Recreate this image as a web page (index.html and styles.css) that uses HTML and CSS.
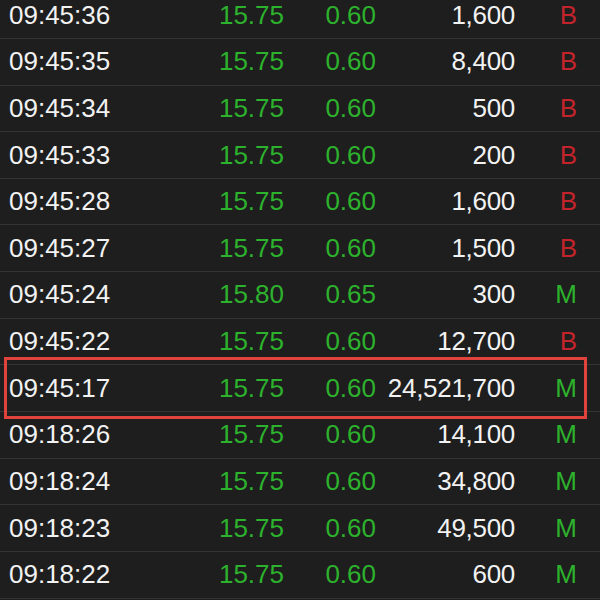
FILE: index.html
```html
<!DOCTYPE html>
<html lang="en">
<head>
  <meta charset="UTF-8">
  <title>Trades</title>
  <meta name="viewport" content="width=device-width, initial-scale=1.0">
  <link rel="stylesheet" href="styles.css">
</head>
<body>

  <div class="trades">
    <div class="row"><span class="time">09:45:36</span><span class="up">15.75</span><span class="up">0.60</span><span class="vol">1,600</span><span class="side buy">B</span></div>
    <div class="row"><span class="time">09:45:35</span><span class="up">15.75</span><span class="up">0.60</span><span class="vol">8,400</span><span class="side buy">B</span></div>
    <div class="row"><span class="time">09:45:34</span><span class="up">15.75</span><span class="up">0.60</span><span class="vol">500</span><span class="side buy">B</span></div>
    <div class="row"><span class="time">09:45:33</span><span class="up">15.75</span><span class="up">0.60</span><span class="vol">200</span><span class="side buy">B</span></div>
    <div class="row"><span class="time">09:45:28</span><span class="up">15.75</span><span class="up">0.60</span><span class="vol">1,600</span><span class="side buy">B</span></div>
    <div class="row"><span class="time">09:45:27</span><span class="up">15.75</span><span class="up">0.60</span><span class="vol">1,500</span><span class="side buy">B</span></div>
    <div class="row"><span class="time">09:45:24</span><span class="up">15.80</span><span class="up">0.65</span><span class="vol">300</span><span class="side match">M</span></div>
    <div class="row"><span class="time">09:45:22</span><span class="up">15.75</span><span class="up">0.60</span><span class="vol">12,700</span><span class="side buy">B</span></div>
    <div class="row marked"><span class="time">09:45:17</span><span class="up">15.75</span><span class="up">0.60</span><span class="vol">24,521,700</span><span class="side match">M</span></div>
    <div class="row"><span class="time">09:18:26</span><span class="up">15.75</span><span class="up">0.60</span><span class="vol">14,100</span><span class="side match">M</span></div>
    <div class="row"><span class="time">09:18:24</span><span class="up">15.75</span><span class="up">0.60</span><span class="vol">34,800</span><span class="side match">M</span></div>
    <div class="row"><span class="time">09:18:23</span><span class="up">15.75</span><span class="up">0.60</span><span class="vol">49,500</span><span class="side match">M</span></div>
    <div class="row"><span class="time">09:18:22</span><span class="up">15.75</span><span class="up">0.60</span><span class="vol">600</span><span class="side match">M</span></div>
  </div>

</body>
</html>
```

FILE: styles.css
```css
body {
  margin: 0;
  background: #1e1e1e;
  color: #f2f2f2;
  font-family: 'Liberation Sans', Arial, sans-serif;
  height: 600px;
  overflow: hidden;
}

.trades {
  margin-top: -7.8px;
}

.row {
  display: grid;
  grid-template-columns: 150px 125px 92px 139px 1fr;
  align-items: center;
  height: 45.67px;
  padding-left: 9px;
  border-bottom: 1px solid #343434;
  font-size: 26px;
  text-align: right;
}

.row .time {
  text-align: left;
}

.up {
  color: #2db22d;
}

.vol {
  letter-spacing: -0.3px;
}

.side {
  padding-right: 23px;
}

.side.buy {
  color: #c3242b;
}

.side.match {
  color: #2db22d;
}

.row.marked {
  position: relative;
}

/* red frame over the highlighted trade */
.row.marked::after {
  content: "";
  position: absolute;
  top: -8.5px;
  bottom: -8px;
  left: 4px;
  right: 13px;
  border: 3px solid #e0433b;
}
```
